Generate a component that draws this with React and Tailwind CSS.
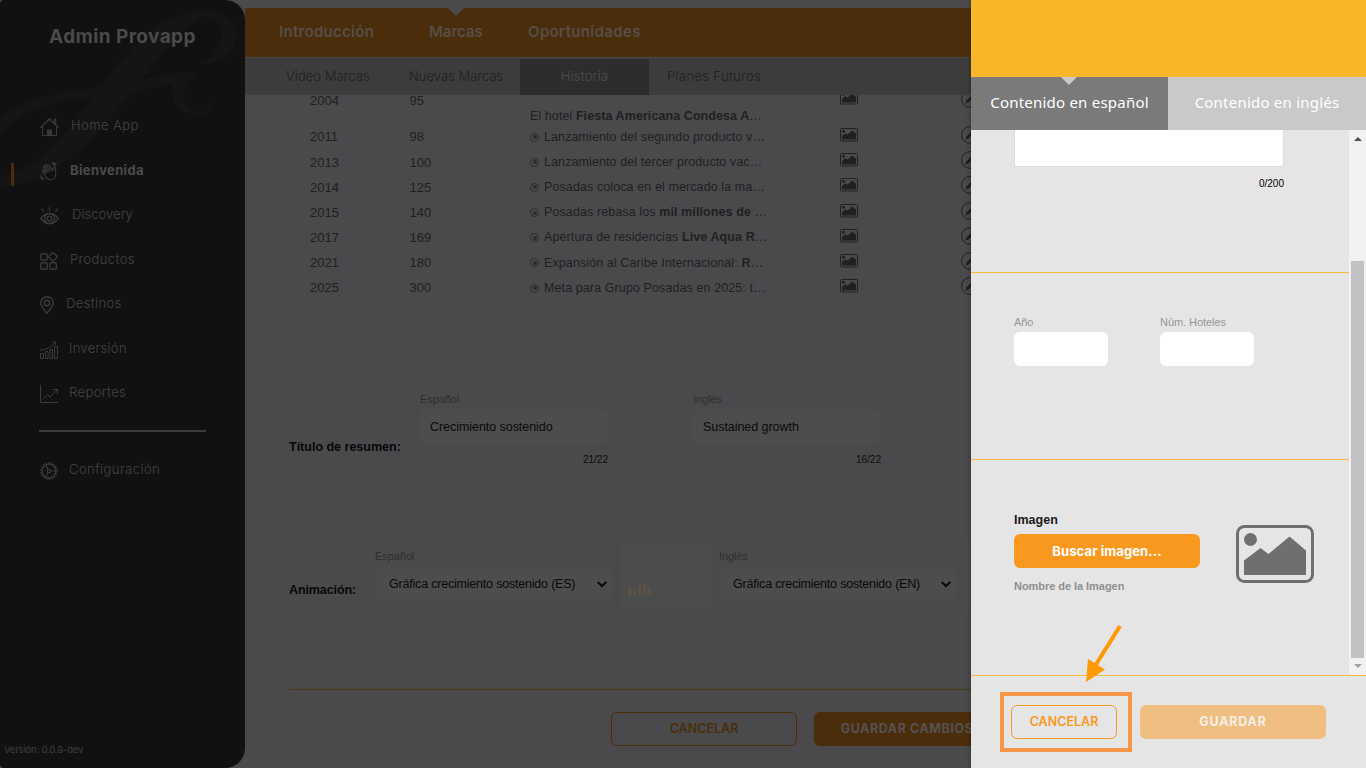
import React, { useState } from "react";

// ---------- Icons ----------
const line = { fill: "none", stroke: "currentColor", strokeWidth: 1 };

const HomeIcon = () => (
  <svg width="19" height="19" viewBox="0 0 19 19" {...line}>
    <path d="M.4 9.8 9.5 1l9.1 8.8" strokeWidth="1.5" />
    <path d="M2.5 8.400V17.500h14V8.400M14.500 5.200V.8h1.300v6" />
    <path d="M7 18v-6.500h5V18z" fill="currentColor" stroke="none" />
  </svg>
);

const WaveIcon = () => (
  <svg width="18" height="19" viewBox="0 0 18 19" {...line} strokeWidth="1.1" strokeLinecap="round" strokeLinejoin="round">
    <path d="M4.7 13.2 2.6 9.8c-.6-1 .8-1.900 1.500-1l2 2.600M6.600 11.200 3.300 6.300c-.7-1.100.8-2 1.500-1l3.400 4.600M8.400 9.800 4.800 4.300c-.7-1.100.9-2 1.600-1l4 5.500M10.200 8.600 7.300 4.300c-.6-1 .9-1.800 1.600-.9l4 5.300.6-2.500c.4-1.300 1.900-1 1.900.3l.4 4.300c.5 4.500-2 7-5.300 7-2.500 0-3.900-1.400-5.800-4.600" />
    <path d="M12 1.400c1.700.1 2.800 1.200 3 2.900M13.300.6c1.500.4 2.400 1.300 2.800 2.700M1 13.600c.1 1.800 1.200 2.800 2.900 3M.7 15.200c.3 1.100 1 1.900 2.100 2.200" />
  </svg>
);

const EyeIcon = () => (
  <svg width="19" height="18" viewBox="0 0 19 18" {...line} strokeWidth="1.3">
    <path d="M.7 11.500C3 8.300 6 6.300 9.500 6.300s6.500 2 8.800 5.200c-2.300 3.200-5.300 5.200-8.800 5.200S3 14.700.7 11.500z" />
    <circle cx="9.500" cy="11.500" r="5" />
    <circle cx="9.500" cy="11.500" r="2.300" />
    <path d="M9.500.3v4M1.700 1.600l2 3.300M17.300 1.600l-2 3.300" />
  </svg>
);

const ProductsIcon = () => (
  <svg width="18" height="18" viewBox="0 0 18 18" {...line} strokeWidth="1.400">
    <rect x=".7" y="1.700" width="6.500" height="6.500" rx="1.300" />
    <rect x=".7" y="10.700" width="6.500" height="6.500" rx="1.300" />
    <rect x="9.900" y="10.700" width="6.500" height="6.500" rx="1.300" />
    <rect x="9.800" y="1.600" width="6.400" height="6.400" rx="1" transform="rotate(45 13 4.800)" />
  </svg>
);

const PinIcon = () => (
  <svg width="14" height="18" viewBox="0 0 14 18" {...line} strokeWidth="1.400">
    <path d="M7 17.300C3.500 13 .7 10.300.7 7a6.300 6.300 0 0 1 12.600 0c0 3.300-2.800 6-6.300 10.300z" />
    <circle cx="7" cy="7" r="2.700" />
  </svg>
);

const InvestIcon = () => (
  <svg width="18" height="18" viewBox="0 0 18 18" {...line}>
    <path d="M.5 17.500v-5h3v5zM5.500 17.500v-7h2.500v7zM10 17.500v-9h2.500v9zM14.500 17.500v-12h3v12z" />
    <path d="M0 9c6 0 11-2.500 15.500-8M12.500.8h3v3" />
  </svg>
);

const ReportIcon = () => (
  <svg width="18" height="18" viewBox="0 0 18 18" {...line}>
    <path d="M.5 0v17.500H18M3 14l4.500-4.500 2.500 2.500L17.300 4.700M12.500 4.500h5V9" />
  </svg>
);

const GearIcon = () => (
  <svg width="18" height="18" viewBox="0 0 18 18" {...line}>
    <circle cx="9" cy="9" r="8.100" strokeWidth="1.600" strokeDasharray="1.500 1.330" />
    <circle cx="9" cy="9" r="6.900" strokeWidth="1.400" />
    <circle cx="9" cy="9" r="1.600" strokeWidth="1.200" />
    <path d="M10.600 9H16M8.200 7.600 5.500 3M8.200 10.400 5.500 15" strokeWidth="1.200" />
  </svg>
);

const ImageIcon = ({ className }) => (
  <svg className={className} viewBox="0 0 78 58" fill="currentColor">
    <rect x="1.500" y="1.500" width="75" height="55" rx="7" fill="none" stroke="currentColor" strokeWidth="3" />
    <circle cx="14.500" cy="14.500" r="6.500" />
    <path d="M8 50V35.500L24.500 23l8 6L53.500 11.500 70 25.500V50z" />
  </svg>
);

const RowImageIcon = () => (
  <svg width="18" height="14" viewBox="0 0 18 14" fill="currentColor">
    <rect x=".5" y=".5" width="17" height="12.500" rx="1" fill="none" stroke="currentColor" />
    <circle cx="3.500" cy="3.300" r="1.500" />
    <path d="M2 11.500V8l3.500-2.700L7.500 6.800 12.300 2.500 16 5.800v5.700z" />
  </svg>
);

const EditIcon = () => (
  <svg width="18" height="18" viewBox="0 0 18 18" fill="none">
    <circle cx="9" cy="9" r="8.400" stroke="currentColor" />
    <path d="M4.300 13.700 5.400 10.500 11.500 4.400 13.600 6.500 7.500 12.600z" fill="currentColor" />
  </svg>
);

const Chevron = () => (
  <svg width="10" height="7" viewBox="0 0 10 7" fill="none" stroke="#070707" strokeWidth="2">
    <path d="M.8 1 5 5.200 9.200 1" />
  </svg>
);

const ChartThumb = () => (
  <svg width="24" height="17" viewBox="0 0 24 17">
    <path d="M1 1.500h5M1 15.800h4M7 15.800h3M12 15.800h2M16 15.800h2" stroke="#42504e" strokeWidth="1.500" />
    <path d="M2.500 7v8M7.500 8v6M12.500 4v10M17.500 2v12M22 6v8" stroke="#5b5145" strokeWidth="3" />
  </svg>
);

// ---------- Data ----------
const navItems = [
  { label: "Home App", Icon: HomeIcon, text: "ml-[12px] tracking-[0.45px]" },
  { label: "Bienvenida", Icon: WaveIcon, text: "ml-[12px] tracking-[0.35px]", active: true },
  { label: "Discovery", Icon: EyeIcon, text: "ml-[13px] tracking-[0.05px]" },
  { label: "Productos", Icon: ProductsIcon, text: "ml-[12px] tracking-[0.4px]" },
  { label: "Destinos", Icon: PinIcon, text: "ml-[12px] tracking-[0.4px]" },
  { label: "Inversión", Icon: InvestIcon, text: "ml-[11px] tracking-[0.3px]" },
  { label: "Reportes", Icon: ReportIcon, text: "ml-[11px] tracking-[0.4px]" },
];

const rows = [
  { year: "2011", hotels: "98", text: "Lanzamiento del segundo producto v…" },
  { year: "2013", hotels: "100", text: "Lanzamiento del tercer producto vac…" },
  { year: "2014", hotels: "125", text: "Posadas coloca en el mercado la ma…" },
  { year: "2015", hotels: "140", text: <>Posadas rebasa los <b>mil millones de</b> …</> },
  { year: "2017", hotels: "169", text: <>Apertura de residencias <b>Live Aqua R</b>…</> },
  { year: "2021", hotels: "180", text: <>Expansión al Caribe Internacional: <b>R</b>…</> },
  { year: "2025", hotels: "300", text: "Meta para Grupo Posadas en 2025: t…" },
];

// ---------- Sidebar ----------
function NavItem({ label, Icon, text, active }) {
  return (
    <li className="relative flex h-[44.5px] items-center pl-10">
      {active && <span className="absolute left-[11px] top-[15px] h-[23px] w-[3px] bg-[#4b2d0b]" />}
      <span className="mt-[3px] text-[#3a3a3a]"><Icon /></span>
      <span className={`text-[13px] leading-none ${text} ${active ? "font-bold text-[#4a4a4a]" : "font-light text-[#444]"}`}>{label}</span>
    </li>
  );
}

function Sidebar() {
  return (
    <aside className="relative flex w-[245px] shrink-0 flex-col overflow-hidden rounded-l-[4px] rounded-r-[20px] bg-[#111]">
      <svg className="absolute left-0 top-0" width="245" height="200" viewBox="0 0 245 200" fill="#151515">
        <path d="M0 176C32 174 62 140 98 90C130 48 158 12 205 11C231 12 241 27 235 44C230 57 216 64 199 64C217 57 226 38 219 25C214 15 203 14 194 22C169 39 142 82 111 118C77 158 39 186 0 186z" />
        <path d="M0 117C32 94 70 91 116 85C146 81 162 73 184 72C193 72 198 75 195 78C182 80 181 101 190 110C198 116 207 112 213 100C214 112 203 117 194 115C177 112 168 98 174 83C153 87 130 96 98 97C60 98 28 107 0 133z" />
      </svg>
      <h1 className="relative mt-[26px] pl-[49px] text-[19px] font-bold leading-[22px] tracking-[0.4px] text-[#4a4a4a]">Admin Provapp</h1>
      <ul className="relative mt-[55.500px]">
        {navItems.map((item) => <NavItem key={item.label} {...item} />)}
      </ul>
      <hr className="ml-[39px] mt-[15px] w-[167px] border-t-2 border-[#3a3a3a]" />
      <ul className="mt-[15px]">
        <NavItem label="Configuración" Icon={GearIcon} text="ml-[11px] tracking-[0.45px]" />
      </ul>
      <p className="mb-[12px] mt-auto pl-1 text-[9.500px] leading-[12px] tracking-[-0.2px] text-[#3f3f3f]">Versión: 0.0.9-dev</p>
    </aside>
  );
}

// ---------- Main ----------
function TextField({ label, value, count }) {
  return (
    <label className="block w-[188px]">
      <span className="block text-[11px] leading-[12px] tracking-[-0.1px] text-[#2f2f30]">{label}</span>
      <span className="mt-[4px] flex h-[34px] items-center rounded-md bg-[#4d4d4d] pl-[10px] pt-[2px] text-[12.500px] tracking-[-0.05px] text-[#0a0a0a]">{value}</span>
      <span className="mt-[11px] block text-right text-[10px] leading-[12px] text-[#0a0a0a]">{count}</span>
    </label>
  );
}

function SelectField({ label, value }) {
  return (
    <label className="block w-[236px] shrink-0">
      <span className="block text-[11px] leading-[12px] tracking-[-0.1px] text-[#2f2f30]">{label}</span>
      <span className="mt-[5px] flex h-[34px] items-center justify-between rounded-md bg-[#4d4d4d] pl-[14px] pr-[4px] text-[12.500px] tracking-[-0.2px] text-[#0a0a0a]">
        {value}
        <Chevron />
      </span>
    </label>
  );
}

function HistoryTable() {
  return (
    <div className="h-[206px] pl-[65px] text-[13px] text-[#202021]">
      <div className="flex h-[29.600px] leading-[12px]">
        <span className="w-[99.500px] shrink-0">2004</span>
        <span className="w-[120.500px] shrink-0">95</span>
        <span className="mt-[15px] w-[310px] shrink-0 whitespace-nowrap text-[12.500px] tracking-[0.08px]">El hotel <b>Fiesta Americana Condesa A</b>…</span>
        <span className="-mt-[4px] w-[121px] shrink-0"><RowImageIcon /></span>
        <span className="-mt-[5px] shrink-0"><EditIcon /></span>
      </div>
      {rows.map((row) => (
        <div key={row.year} className="flex h-[25.170px] items-center whitespace-nowrap">
          <span className="w-[99.500px] shrink-0">{row.year}</span>
          <span className="w-[120.500px] shrink-0">{row.hotels}</span>
          <span className="flex w-[310px] shrink-0 items-center gap-[5px]">
            <span className="flex size-[9px] items-center justify-center rounded-full border border-[#2c2c2d]">
              <i className="size-[4px] rounded-full bg-[#2c2c2d]" />
            </span>
            <span className="text-[12.500px] tracking-[0.1px]">{row.text}</span>
          </span>
          <span className="-mt-[4px] w-[121px] shrink-0"><RowImageIcon /></span>
          <span className="-mt-[4px] shrink-0"><EditIcon /></span>
        </div>
      ))}
    </div>
  );
}

function Main() {
  return (
    <main className="flex w-[726px] shrink-0 flex-col overflow-hidden pt-2">
      <nav className="relative flex h-[49px] bg-[#4b2d0b] pl-[34px] text-[15px] font-semibold leading-[48px] text-[#564e48]">
        <span className="absolute left-[203px] top-0 border-x-8 border-t-8 border-x-transparent border-t-[#4a4a4c]" />
        <a className="w-[150px] tracking-[0.3px]">Introducción</a>
        <a className="w-[99px]">Marcas</a>
        <a className="tracking-[0.35px]">Oportunidades</a>
      </nav>
      <nav className="relative z-10 flex h-[38px] border-t border-[#4a4a4c] bg-[#3c3c3c] text-[13px] font-light leading-[37px] text-[#1f1f1f]">
        <a className="w-[164px] pl-[41px] tracking-[0.05px]">Video Marcas</a>
        <a className="w-[111px]">Nuevas Marcas</a>
        <a className="mt-px w-[129px] bg-[#2d2d2d] text-center leading-[35px] tracking-[0.2px] text-[#505050]">Historia</a>
        <a className="pl-[18px] tracking-[0.35px]">Planes Futuros</a>
      </nav>

      <div className="font-['Liberation_Sans',Arial,sans-serif]">
        <HistoryTable />

        <div className="mt-[92px] flex pl-[44px]">
          <b className="mt-[46px] w-[131px] text-[12.500px] leading-[16px] text-[#070707]">Título de resumen:</b>
          <TextField label="Español" value="Crecimiento sostenido" count="21/22" />
          <span className="w-[85px]" />
          <TextField label="Inglés" value="Sustained growth" count="16/22" />
        </div>

        <div className="mt-[76px] flex pl-[44px]">
          <b className="mt-[40px] w-[86px] shrink-0 text-[12.500px] leading-[16px] tracking-[-0.1px] text-[#070707]">Animación:</b>
          <span className="mt-[8px]"><SelectField label="Español" value="Gráfica crecimiento sostenido (ES)" /></span>
          <span className="ml-[9px] flex h-[68px] w-[90px] shrink-0 items-end bg-[#4c4c4c] pb-[12px] pl-[7px]"><ChartThumb /></span>
          <span className="ml-[9px] mt-[8px]"><SelectField label="Inglés" value="Gráfica crecimiento sostenido (EN)" /></span>
          <span className="ml-[9px] h-[68px] w-[90px] shrink-0 bg-[#4c4c4c]" />
        </div>
      </div>

      <div className="ml-[44px] mt-auto flex h-[79px] shrink-0 gap-[17px] border-t border-[#4a3a12] pl-[322px] pt-[22px] text-[12.500px] font-semibold">
        <button className="h-[34px] w-[186px] shrink-0 rounded-md border border-[#4b2d0b] pt-px text-[#4b2d0b]">CANCELAR</button>
        <button className="h-[34px] w-[186px] shrink-0 rounded-md bg-[#4b2d0b] pt-px font-bold tracking-[0.550px] text-[#565150]">GUARDAR CAMBIOS</button>
      </div>
    </main>
  );
}

// ---------- Drawer ----------
function ScrollBar() {
  return (
    <div className="flex w-[17px] flex-col items-center bg-[#f1f1f1]">
      <span className="mt-[7px] border-x-4 border-b-4 border-x-transparent border-b-[#505050]" />
      <span className="mt-[120px] h-[397px] w-[13px] bg-[#c1c1c1]" />
      <span className="mt-[6px] border-x-4 border-t-4 border-x-transparent border-t-[#a3a3a3]" />
    </div>
  );
}

function Drawer() {
  const [tab, setTab] = useState("es");
  return (
    <section className="relative z-20 flex w-[395px] shrink-0 flex-col bg-[#e5e5e5] font-['Liberation_Sans',Arial,sans-serif] shadow-[-1px_0_4px_rgba(0,0,0,0.25)]">
      <div className="h-[77px] bg-[#f9b628]" />
      <div className="relative flex h-[53px] font-['Noto_Sans',sans-serif] text-[15px] tracking-[0.220px] text-white">
        <span className="absolute left-[90px] top-0 border-x-8 border-t-8 border-x-transparent border-t-[#c9c9c9]" />
        <button onClick={() => setTab("es")} className={`w-[197px] pb-[2px] ${tab === "es" ? "bg-[#7a7a7a]" : "bg-[#c9c9c9]"}`}>Contenido en español</button>
        <button onClick={() => setTab("en")} className={`flex-1 pb-[2px] ${tab === "en" ? "bg-[#7a7a7a]" : "bg-[#c9c9c9]"}`}>Contenido en inglés</button>
      </div>

      <div className="flex h-[545px]">
        <div className="flex w-[378px] flex-col">
          <div className="h-[143px] border-b border-[#f9b93a] pl-[43px]">
            <div className="h-[37px] w-[270px] border border-t-0 border-[#dcdcdc] bg-white" />
            <p className="mt-[11px] w-[270px] text-right text-[10px] leading-[12px] text-black">0/200</p>
          </div>
          <div className="flex h-[187px] gap-[52px] border-b border-[#f9b93a] pl-[43px] pt-[43px] text-[11px] leading-[12px] tracking-[-0.050px] text-[#979797]">
            <label>Año<span className="mt-[4px] block h-[34px] w-[94px] rounded-md bg-white" /></label>
            <label>Núm. Hoteles<span className="mt-[4px] block h-[34px] w-[94px] rounded-md bg-white" /></label>
          </div>
          <div className="flex pl-[43px] pt-[52px]">
            <div className="w-[186px]">
              <p className="text-[12.500px] font-bold leading-[16px] text-[#1a1a1a]">Imagen</p>
              <button className="mt-[6px] block h-[34px] w-full rounded-md bg-[#f9981f] pt-[2px] font-[Inter,sans-serif] text-[13px] font-bold tracking-[0.1px] text-white">Buscar imagen...</button>
              <p className="mt-[12px] text-[11px] font-bold leading-[12px] tracking-[-0.050px] text-[#8f8f8f]">Nombre de la Imagen</p>
            </div>
            <ImageIcon className="ml-[36px] mt-[13px] h-[58px] w-[78px] text-[#6e6f71]" />
          </div>
        </div>
        <ScrollBar />
      </div>

      <footer className="flex h-[93px] border-t border-[#f9b93a] pl-[29px] pt-[16px] font-[Inter,sans-serif] text-[12.500px]">
        <div className="h-[60px] w-[132px] border-4 border-[#f79646] pl-[7px] pt-[9px]">
          <button className="h-[34px] w-[106px] rounded-md border border-[#f9981f] pt-px font-semibold text-[#f9981f]">CANCELAR</button>
        </div>
        <button className="ml-[8px] mt-[13px] h-[34px] w-[186px] rounded-md bg-[#efbe80] pt-px font-bold tracking-[0.8px] text-[#f3eee7]">GUARDAR</button>
      </footer>

      {/* pointer towards the cancel button */}
      <svg className="absolute left-[110px] top-[620px]" width="44" height="66" viewBox="0 0 44 66">
        <path d="M39 6 14 46" stroke="#ff9900" strokeWidth="4" />
        <path d="M5 62 7 39 24 49.500z" fill="#ff9900" />
      </svg>
    </section>
  );
}

export default function App() {
  return (
    <div className="flex h-[768px] w-[1366px] overflow-hidden bg-[#4a4a4c] font-[Inter,'Open_Sans',sans-serif]">
      <Sidebar />
      <Main />
      <Drawer />
    </div>
  );
}
